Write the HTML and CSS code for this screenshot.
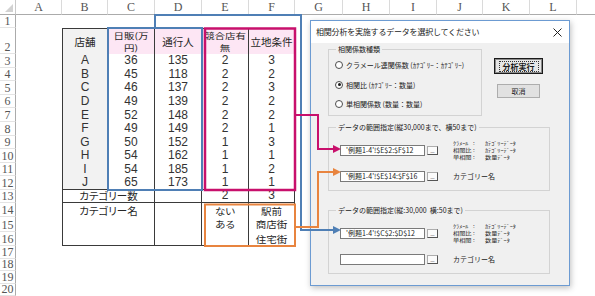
FILE: index.html
```html
<!DOCTYPE html>
<html lang="ja">
<head>
<meta charset="utf-8">
<title>相関分析</title>
<link rel="stylesheet" href="styles.css">
</head>
<body>
<div class="sheet">
  <div class="corner"></div>
  <div class="ch">A</div><div class="ch">B</div><div class="ch">C</div><div class="ch">D</div><div class="ch">E</div><div class="ch">F</div><div class="ch">G</div><div class="ch">H</div><div class="ch">I</div><div class="ch">J</div><div class="ch">K</div><div class="ch">L</div><div class="ch"></div>
  <div class="rh">1</div><div class="rh">2</div><div class="rh">3</div><div class="rh">4</div><div class="rh">5</div><div class="rh">6</div><div class="rh">7</div><div class="rh">8</div><div class="rh">9</div><div class="rh">10</div><div class="rh">11</div><div class="rh">12</div><div class="rh">13</div><div class="rh">14</div><div class="rh">15</div><div class="rh">16</div><div class="rh">17</div><div class="rh">18</div><div class="rh">19</div><div class="rh">20</div>

  <div class="tbl">
    <div class="c hd key">店舗</div>
    <div class="c hd pk"><span class="two">日販(万<br>円)</span></div>
    <div class="c hd pk">通行人</div>
    <div class="c hd pk"><span class="two">競合店有<br>無</span></div>
    <div class="c hd pk">立地条件</div>

    <div class="c key n">A</div><div class="c n">36</div><div class="c n">135</div><div class="c n">2</div><div class="c n">3</div>
    <div class="c key n">B</div><div class="c n">45</div><div class="c n">118</div><div class="c n">2</div><div class="c n">2</div>
    <div class="c key n">C</div><div class="c n">46</div><div class="c n">137</div><div class="c n">2</div><div class="c n">3</div>
    <div class="c key n">D</div><div class="c n">49</div><div class="c n">139</div><div class="c n">2</div><div class="c n">2</div>
    <div class="c key n">E</div><div class="c n">52</div><div class="c n">148</div><div class="c n">2</div><div class="c n">2</div>
    <div class="c key n">F</div><div class="c n">49</div><div class="c n">149</div><div class="c n">2</div><div class="c n">1</div>
    <div class="c key n">G</div><div class="c n">50</div><div class="c n">152</div><div class="c n">1</div><div class="c n">3</div>
    <div class="c key n">H</div><div class="c n">54</div><div class="c n">162</div><div class="c n">1</div><div class="c n">1</div>
    <div class="c key n">I</div><div class="c n">54</div><div class="c n">185</div><div class="c n">1</div><div class="c n">2</div>
    <div class="c key n bb">J</div><div class="c n bb">65</div><div class="c n bb">173</div><div class="c n bb">1</div><div class="c n bb">1</div>

    <div class="c key span2 bb jp">カテゴリー数</div><div class="c bb"></div><div class="c n bb">2</div><div class="c n bb">3</div>

    <div class="c key span2 rows3 bb jp top">カテゴリー名</div>
    <div class="c rows3 bb"></div>
    <div class="c rows3 bb jp top"><span class="multi">ない<br>ある</span></div>
    <div class="c rows3 bb jp top"><span class="multi">駅前<br>商店街<br>住宅街</span></div>
  </div>
</div>

<div class="dlg">
  <div class="dlg-title">
    <span class="ttl">相関分析を実施するデータを選択してください</span>
    <svg class="close" width="9" height="9" viewBox="0 0 9 9"><path d="M0.5 0.5L8.5 8.5M8.5 0.5L0.5 8.5" stroke="#222" stroke-width="1"/></svg>
  </div>
  <div class="dlg-body">
    <div class="top">
      <div class="group g1">
        <span class="legend">相関係数種類</span>
        <div class="radio"><i class="rb"></i><span>クラメール連関係数 (ｶﾃｺﾞﾘｰ：ｶﾃｺﾞﾘｰ)</span></div>
        <div class="radio"><i class="rb on"></i><span>相関比 (ｶﾃｺﾞﾘｰ：数量)</span></div>
        <div class="radio"><i class="rb"></i><span>単相関係数 (数量：数量)</span></div>
      </div>
      <div class="btns">
        <div class="btn def"><span class="focus">分析実行</span></div>
        <div class="btn">取消</div>
      </div>
    </div>

    <div class="group g2">
      <span class="legend">データの範囲指定(縦30,000まで、横50まで)</span>
      <div class="ref"><div class="field">'例題1-4'!$E$2:$F$12</div><div class="pick">_</div></div>
      <div class="info">
        <span>ｸﾗﾒｰﾙ</span><span>:</span><span>ｶﾃｺﾞﾘｰﾃﾞｰﾀ</span>
        <span>相関比</span><span>:</span><span>ｶﾃｺﾞﾘｰﾃﾞｰﾀ</span>
        <span>単相関</span><span>:</span><span>数量ﾃﾞｰﾀ</span>
      </div>
      <div class="ref"><div class="field">'例題1-4'!$E$14:$F$16</div><div class="pick">_</div></div>
      <div class="cat">カテゴリー名</div>
    </div>

    <div class="group g3">
      <span class="legend">データの範囲指定(縦:30,000&nbsp; 横:50まで)</span>
      <div class="ref"><div class="field">'例題1-4'!$C$2:$D$12</div><div class="pick">_</div></div>
      <div class="info">
        <span>ｸﾗﾒｰﾙ</span><span>:</span><span>ｶﾃｺﾞﾘｰﾃﾞｰﾀ</span>
        <span>相関比</span><span>:</span><span>数量ﾃﾞｰﾀ</span>
        <span>単相関</span><span>:</span><span>数量ﾃﾞｰﾀ</span>
      </div>
      <div class="ref"><div class="field"></div><div class="pick">_</div></div>
      <div class="cat">カテゴリー名</div>
    </div>
  </div>
</div>

<svg class="overlay" width="595" height="296" viewBox="0 0 595 296">
  <rect x="108" y="28" width="94" height="162" fill="none" stroke="#4f7fb5" stroke-width="2"/>
  <path d="M155 28V15H301V230H334" fill="none" stroke="#4f7fb5" stroke-width="2"/>
  <polygon points="333,226 341,230 333,234" fill="#4f7fb5"/>

  <rect x="205" y="28.5" width="90" height="161.5" fill="none" stroke="#c8106c" stroke-width="2.5"/>
  <path d="M296 115H318V149H334" fill="none" stroke="#c8106c" stroke-width="2"/>
  <polygon points="333,145 341,149 333,153" fill="#c8106c"/>

  <rect x="205" y="204.5" width="90" height="41.5" fill="none" stroke="#e8843f" stroke-width="2"/>
  <path d="M296 227H318V172H334" fill="none" stroke="#e8843f" stroke-width="2"/>
  <polygon points="333,168 341,172 333,176" fill="#e8843f"/>
</svg>
</body>
</html>
```

FILE: styles.css
```css
* { box-sizing: border-box; margin: 0; padding: 0; }
html, body { width: 595px; height: 296px; overflow: hidden; background: #fff; }
body { position: relative; font-family: "Noto Sans CJK JP", sans-serif; color: #222; }

.sheet {
  display: grid;
  grid-template-columns: 16px 46px 46px 47px 47px 47px 46px 48px 47px 47px 46px 47px 47px 30px;
  grid-template-rows: 15px 13px 26px repeat(10, 13.6px) 13px 14.3px 14.3px 14.4px 13px 12.5px 12.5px 12.5px;
}
.corner { grid-column: 1; grid-row: 1; position: relative; border-right: 1px solid #c9c9c9; border-bottom: 1px solid #ababab; }
.corner::after { content: ""; position: absolute; right: 2px; bottom: 2px; border-left: 8px solid transparent; border-bottom: 8px solid #d2d2d2; }
.ch {
  grid-row: 1; border-right: 1px solid #dadada; border-bottom: 1px solid #ababab;
  font: 12px/14px "Liberation Serif", serif; color: #555;
  display: flex; align-items: center; justify-content: center;
}
.rh {
  grid-column: 1; border-right: 1px solid #ababab; border-bottom: 1px solid #e4e4e4;
  font: 12px/12px "Liberation Serif", serif; color: #555;
  display: flex; align-items: flex-end; justify-content: center;
}

.tbl {
  grid-column: 3 / 8; grid-row: 3 / 18;
  display: grid; grid-template-columns: subgrid; grid-template-rows: subgrid;
}
.c {
  border-right: 1px solid #3a3a3a;
  display: flex; align-items: center; justify-content: center; text-align: center;
  font-size: 10.5px; line-height: 13px; color: #262626;
  font-feature-settings: "palt";
}
.hd { border-top: 1px solid #3a3a3a; }
.two { display: inline-block; font-size: 10.5px; line-height: 15.2px; transform: scaleY(0.8); }
.key { border-left: 1px solid #3a3a3a; background: #f2f2f2; }
.pk { background: #fde6f4; }
.n { font: 12px/13px "Liberation Sans", sans-serif; color: #333; }
.bb { border-bottom: 1px solid #3a3a3a; }
.span2 { grid-column: span 2; }
.key.span2 { background: #fff; }
.rows3 { grid-row: span 3; }
.top { align-items: flex-start; padding-top: 1px; line-height: 14px; }
.multi { display: inline-block; line-height: 15.4px; transform: scaleY(0.9); transform-origin: top; }
.jp { font-size: 10.5px; }

/* dialog */
.dlg {
  position: absolute; left: 310px; top: 20px; width: 260px; height: 266px;
  background: #f0f0f0; border: 1px solid #6c9bd2;
  box-shadow: 1px 2px 6px rgba(0,0,0,0.25);
  font-size: 7px; line-height: 10px; color: #1a1a1a;
}
.dlg-title {
  height: 22px; background: #fff; display: flex; align-items: center; justify-content: space-between;
  padding: 0 7px 0 5px; font-size: 8px;
}
.ttl { letter-spacing: -0.2px; }
.close { display: block; }
.dlg-body { padding: 0 0 0 17px; }
.dlg-body .top { display: flex; padding: 0; line-height: 10px; align-items: stretch; }
.group { position: relative; border: 1px solid #d3d3d3; }
.legend { position: absolute; top: -6px; left: 7px; padding: 0 2px; background: #f0f0f0; white-space: nowrap; }
.g1 { margin-top: 6px; width: 154px; height: 67px; padding: 9px 0 0 6px; display: flex; flex-direction: column; gap: 7.5px; }
.radio { display: flex; align-items: center; height: 12px; gap: 3px; white-space: nowrap; }
.rb { display: block; width: 8px; height: 8px; border: 1px solid #4d4d4d; border-radius: 50%; background: #fff; position: relative; }
.rb.on::after { content: ""; position: absolute; left: 1.5px; top: 1.5px; width: 3px; height: 3px; border-radius: 50%; background: #1a1a1a; }
.btns { display: flex; flex-direction: column; align-items: center; width: 49px; margin-left: 12px; padding-top: 15px; gap: 10px; }
.btn {
  width: 43px; height: 14px; border: 1px solid #adadad; background: #e1e1e1;
  display: flex; align-items: center; justify-content: center; font-size: 7px;
}
.btn.def { width: 49px; height: 16px; border: 1px solid #1a1a1a; box-shadow: inset 0 0 0 1px #8a8a8a; background: #e6e6e6; font-weight: bold; font-size: 8px; }
.focus { border: 1px dotted #333; padding: 0 3px; line-height: 9px; }

.g2, .g3 {
  width: 222px; height: 64px; padding: 11px 0 0 11px;
  display: grid; grid-template-columns: 98px auto; grid-template-rows: 22px 22px; column-gap: 15px; row-gap: 4px; align-items: center;
}
.g2 { margin-top: 11px; }
.g3 { margin-top: 19px; }
.ref { display: flex; align-items: center; gap: 2px; }
.field {
  width: 85px; height: 11px; background: #fff; border: 1px solid #7a7a7a;
  padding-left: 5px; font-size: 7px; line-height: 9px; white-space: nowrap; overflow: hidden;
}
.pick {
  width: 11px; height: 9px; background: #fbfbfb; border: 1px solid #adadad; border-right-color: #555; border-bottom-color: #555;
  font: bold 7px/5px "Liberation Sans", sans-serif; text-align: center;
}
.info {
  display: grid; grid-template-columns: 20px 12px auto; font-size: 6.2px; line-height: 9.4px; white-space: nowrap;
  transform: scaleY(0.74);
}
.cat { font-size: 7px; }

.overlay { position: absolute; left: 0; top: 0; pointer-events: none; }
```
